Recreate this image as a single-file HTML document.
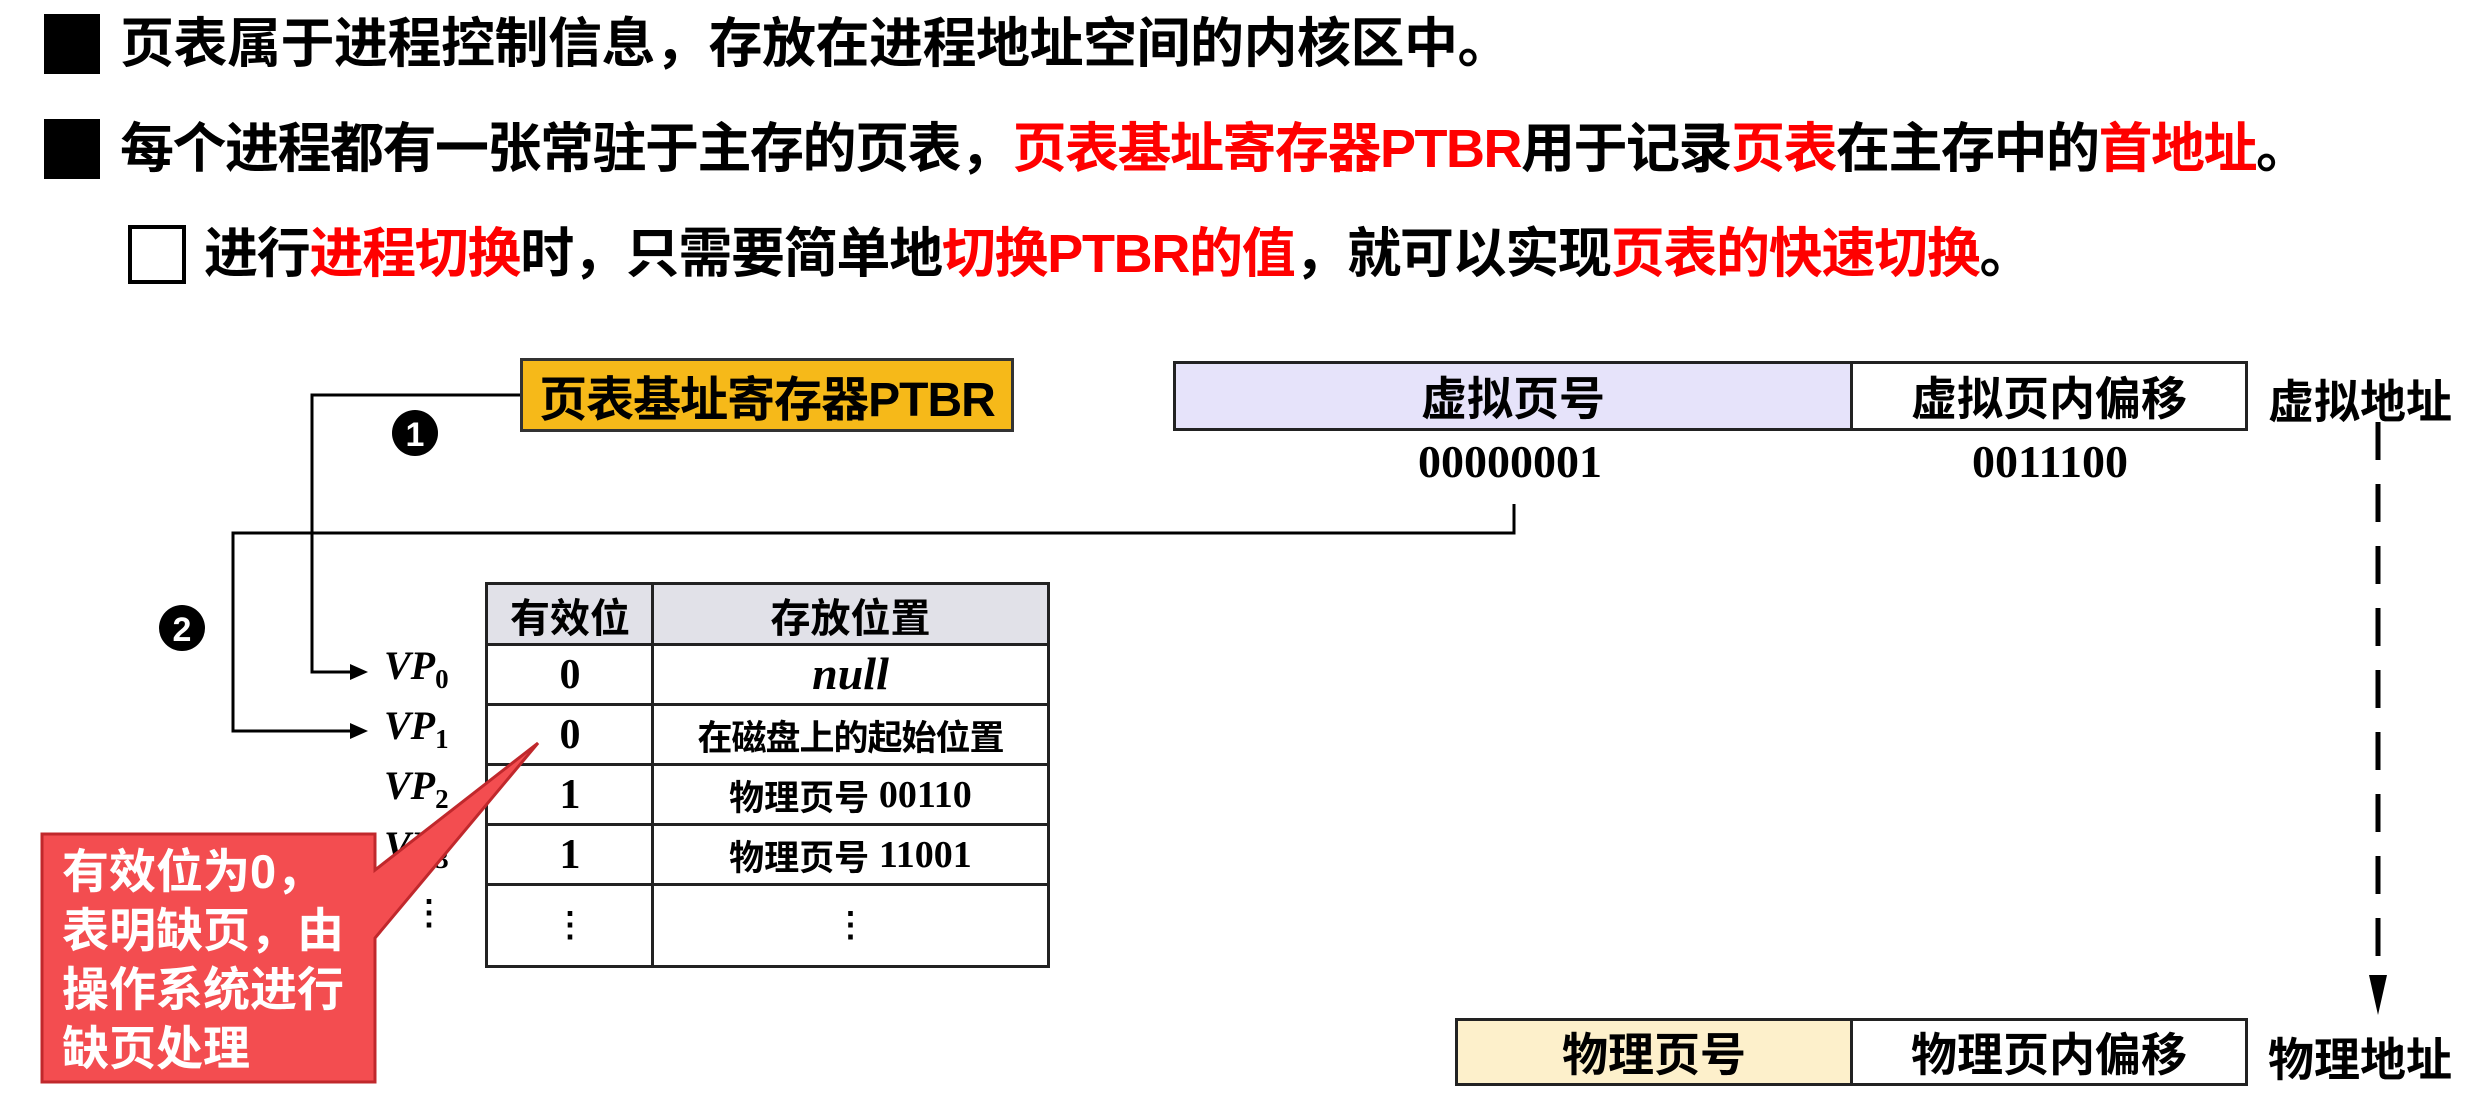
<!DOCTYPE html>
<html><head><meta charset="utf-8"><style>
*{margin:0;padding:0;box-sizing:border-box}
body{width:2485px;height:1093px;background:#fff;position:relative;overflow:hidden;font-family:"Liberation Sans","Noto Sans CJK SC",sans-serif;font-weight:bold;color:#000}
.a{position:absolute;white-space:nowrap}
.line{font-size:54px;line-height:60px;letter-spacing:-0.5px}
.r{color:#f00}
.c{display:flex;align-items:center;justify-content:center}
.ser{font-family:"Liberation Serif","DejaVu Serif",serif;font-weight:bold}
.vp{font-family:"Liberation Serif",serif;font-style:italic;font-weight:bold;font-size:40px}
.vp sub{font-style:normal;font-size:27px}
</style></head><body>
<div class="a" style="left:44px;top:14px;width:56px;height:60px;background:#000"></div>
<div class="a line" style="left:120px;top:14px">页表属于进程控制信息，存放在进程地址空间的内核区中。</div>
<div class="a" style="left:44px;top:119px;width:56px;height:60px;background:#000"></div>
<div class="a line" style="left:120px;top:119px;letter-spacing:-1.5px">每个进程都有一张常驻于主存的页表，<span class="r">页表基址寄存器PTBR</span>用于记录<span class="r">页表</span>在主存中的<span class="r">首地址</span>。</div>
<div class="a" style="left:128px;top:225px;width:58px;height:59px;border:4px solid #000"></div>
<div class="a line" style="left:204px;top:224px;letter-spacing:-1.3px">进行<span class="r">进程切换</span>时，只需要简单地<span class="r">切换PTBR的值</span>，就可以实现<span class="r">页表的快速切换</span>。</div>

<svg class="a" style="left:0;top:0" width="2485" height="1093">
<g stroke="#000" stroke-width="3" fill="none">
<polyline points="520,395 312,395 312,672 352,672"/>
<polyline points="1514,504 1514,533 233,533 233,731 352,731"/>
<line x1="2378" y1="422" x2="2378" y2="975" stroke-width="5" stroke-dasharray="38,24"/>
</g>
<polygon points="350,664 368,672 350,680" fill="#000"/>
<polygon points="350,723 368,731 350,739" fill="#000"/>
<polygon points="2369,975 2387,975 2378,1015" fill="#000"/>
<circle cx="415" cy="433" r="23" fill="#000"/>
<circle cx="182" cy="628" r="23" fill="#000"/>
<text x="415" y="446" font-size="34" fill="#fff" text-anchor="middle" font-family="Liberation Sans" font-weight="bold">1</text>
<text x="182" y="641" font-size="34" fill="#fff" text-anchor="middle" font-family="Liberation Sans" font-weight="bold">2</text>
</svg>

<div class="a c" style="left:520px;top:358px;width:494px;height:74px;background:#f6b919;border:3px solid #333;font-size:48px;letter-spacing:-1px">页表基址寄存器PTBR</div>

<div class="a c" style="left:1173px;top:361px;width:680px;height:70px;background:#e6e3fa;border:3px solid #222;font-size:46px">虚拟页号</div>
<div class="a c" style="left:1850px;top:361px;width:398px;height:70px;background:#fff;border:3px solid #222;font-size:46px">虚拟页内偏移</div>
<div class="a" style="left:2268px;top:366px;font-size:46px">虚拟地址</div>
<div class="a ser c" style="left:1360px;top:433px;width:300px;height:56px;font-size:46px">00000001</div>
<div class="a ser c" style="left:1900px;top:433px;width:300px;height:56px;font-size:46px">0011100</div>

<div class="a c" style="left:1455px;top:1018px;width:398px;height:68px;background:#fdf0cb;border:3px solid #222;font-size:46px">物理页号</div>
<div class="a c" style="left:1850px;top:1018px;width:398px;height:68px;background:#fff;border:3px solid #222;font-size:46px">物理页内偏移</div>
<div class="a" style="left:2268px;top:1024px;font-size:46px">物理地址</div>

<div class="a" style="left:485px;top:582px;width:565px;height:386px;border:3px solid #222">
 <div class="a" style="left:0;top:0;width:559px;height:59px;background:#e1e1e8"></div>
 <div class="a" style="left:163px;top:0;width:3px;height:380px;background:#222"></div>
 <div class="a" style="left:0;top:58px;width:559px;height:3px;background:#222"></div>
 <div class="a" style="left:0;top:118px;width:559px;height:3px;background:#222"></div>
 <div class="a" style="left:0;top:178px;width:559px;height:3px;background:#222"></div>
 <div class="a" style="left:0;top:238px;width:559px;height:3px;background:#222"></div>
 <div class="a" style="left:0;top:298px;width:559px;height:3px;background:#222"></div>
 <div class="a c" style="left:0;top:0;width:164px;height:59px;font-size:40px">有效位</div>
 <div class="a c" style="left:166px;top:0;width:393px;height:59px;font-size:40px">存放位置</div>
 <div class="a c ser" style="left:0;top:60px;width:164px;height:60px;font-size:42px">0</div>
 <div class="a c ser" style="left:166px;top:58px;width:393px;height:60px;font-size:46px;font-style:italic">null</div>
 <div class="a c ser" style="left:0;top:120px;width:164px;height:60px;font-size:42px">0</div>
 <div class="a c" style="left:166px;top:120px;width:393px;height:60px;font-size:35px;letter-spacing:-1px">在磁盘上的起始位置</div>
 <div class="a c ser" style="left:0;top:180px;width:164px;height:60px;font-size:42px">1</div>
 <div class="a c" style="left:166px;top:180px;width:393px;height:60px;font-size:35px">物理页号&nbsp;<span class="ser" style="font-size:38px">00110</span></div>
 <div class="a c ser" style="left:0;top:240px;width:164px;height:60px;font-size:42px">1</div>
 <div class="a c" style="left:166px;top:240px;width:393px;height:60px;font-size:35px">物理页号&nbsp;<span class="ser" style="font-size:38px">11001</span></div>
 <div class="a c ser" style="left:0;top:300px;width:164px;height:80px;font-size:34px">⋮</div>
 <div class="a c ser" style="left:166px;top:300px;width:393px;height:80px;font-size:34px">⋮</div>
</div>
<div class="a vp" style="left:384px;top:642px">VP<sub>0</sub></div>
<div class="a vp" style="left:384px;top:702px">VP<sub>1</sub></div>
<div class="a vp" style="left:384px;top:762px">VP<sub>2</sub></div>
<div class="a vp" style="left:384px;top:822px">VP<sub>3</sub></div>
<div class="a ser" style="left:412px;top:893px;font-size:34px">⋮</div>

<svg class="a" style="left:0;top:0" width="2485" height="1093">
<polygon points="42,834 375,834 375,870 538,743 375,938 375,1082 42,1082" fill="#f34d50" stroke="#c0282c" stroke-width="3"/>
</svg>
<div class="a" style="left:62px;top:842px;color:#fff;font-size:47px;line-height:59px">有效位为0，<br>表明缺页，由<br>操作系统进行<br>缺页处理</div>
</body></html>
